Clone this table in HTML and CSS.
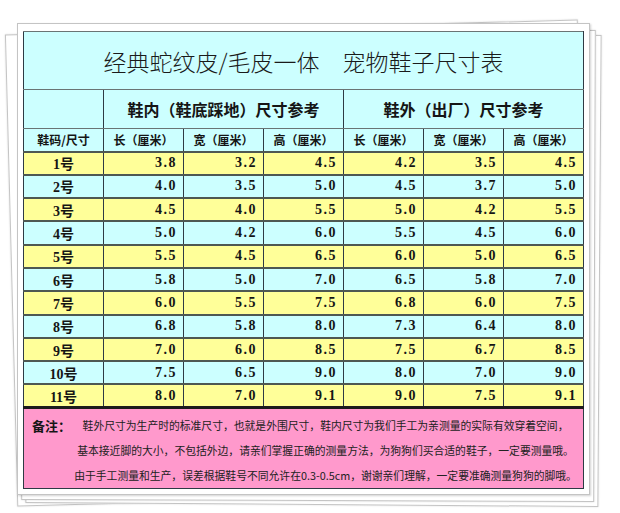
FILE: index.html
```html
<!DOCTYPE html>
<html lang="zh-CN">
<head>
<meta charset="utf-8">
<title>宠物鞋子尺寸表</title>
<link rel="stylesheet" href="styles.css">
</head>
<body>
<div class="stage">
  <div class="sheet back back-1"></div>
  <div class="sheet back back-2"></div>
  <div class="sheet back back-3"></div>
  <div class="sheet front">
    <table class="chart">
      <colgroup>
        <col><col><col><col><col><col><col>
      </colgroup>
      <tr class="title-row"><th colspan="7" class="title">经典蛇纹皮/毛皮一体　宠物鞋子尺寸表</th></tr>
      <tr class="group-row"><th></th><th colspan="3">鞋内（鞋底踩地）尺寸参考</th><th colspan="3">鞋外（出厂）尺寸参考</th></tr>
      <tr class="col-row"><th>鞋码/尺寸</th><th>长（厘米）</th><th>宽（厘米）</th><th>高（厘米）</th><th>长（厘米）</th><th>宽（厘米）</th><th>高（厘米）</th></tr>
      <tr class="row yellow"><th>1号</th><td>3.8</td><td>3.2</td><td>4.5</td><td>4.2</td><td>3.5</td><td>4.5</td></tr>
      <tr class="row cyan"><th>2号</th><td>4.0</td><td>3.5</td><td>5.0</td><td>4.5</td><td>3.7</td><td>5.0</td></tr>
      <tr class="row yellow"><th>3号</th><td>4.5</td><td>4.0</td><td>5.5</td><td>5.0</td><td>4.2</td><td>5.5</td></tr>
      <tr class="row cyan"><th>4号</th><td>5.0</td><td>4.2</td><td>6.0</td><td>5.5</td><td>4.5</td><td>6.0</td></tr>
      <tr class="row yellow"><th>5号</th><td>5.5</td><td>4.5</td><td>6.5</td><td>6.0</td><td>5.0</td><td>6.5</td></tr>
      <tr class="row cyan"><th>6号</th><td>5.8</td><td>5.0</td><td>7.0</td><td>6.5</td><td>5.8</td><td>7.0</td></tr>
      <tr class="row yellow"><th>7号</th><td>6.0</td><td>5.5</td><td>7.5</td><td>6.8</td><td>6.0</td><td>7.5</td></tr>
      <tr class="row cyan"><th>8号</th><td>6.8</td><td>5.8</td><td>8.0</td><td>7.3</td><td>6.4</td><td>8.0</td></tr>
      <tr class="row yellow"><th>9号</th><td>7.0</td><td>6.0</td><td>8.5</td><td>7.5</td><td>6.7</td><td>8.5</td></tr>
      <tr class="row cyan"><th>10号</th><td>7.5</td><td>6.5</td><td>9.0</td><td>8.0</td><td>7.0</td><td>9.0</td></tr>
      <tr class="row yellow"><th>11号</th><td>8.0</td><td>7.0</td><td>9.1</td><td>9.0</td><td>7.5</td><td>9.1</td></tr>
      <tr class="notes-row">
        <td colspan="7" class="notes-cell">
          <div class="notes">
            <span class="notes-label">备注：</span>
            <div class="notes-lines">
              <p>鞋外尺寸为生产时的标准尺寸，也就是外围尺寸，鞋内尺寸为我们手工为亲测量的实际有效穿着空间，</p>
              <p>基本接近脚的大小，不包括外边，请亲们掌握正确的测量方法，为狗狗们买合适的鞋子，一定要测量哦。</p>
              <p>由于手工测量和生产，误差根据鞋号不同允许在0.3-0.5cm，谢谢亲们理解，一定要准确测量狗狗的脚哦。</p>
            </div>
          </div>
        </td>
      </tr>
    </table>
  </div>
</div>
</body>
</html>
```

FILE: styles.css
```css
* { box-sizing: border-box; }

html, body {
  margin: 0;
  padding: 0;
  background: #ffffff;
}

body {
  font-family: "Noto Sans CJK SC", "Noto Sans", sans-serif;
  color: #151515;
}

.stage {
  position: relative;
  width: 620px;
  height: 513px;
  padding: 23px 0 0 17px;
  overflow: hidden;
}

.sheet {
  width: 573px;
  height: 472px;
  background: #ffffff;
  border: 1px solid #c4c4c4;
}

.back {
  position: absolute;
  box-shadow: 0 0 2px rgba(0, 0, 0, 0.15);
}

.back-1 {
  left: 11px;
  top: 27px;
  transform: rotate(-1.5deg);
}

.back-2 {
  left: 27px;
  top: 33px;
  transform: rotate(0.4deg);
}

.back-3 {
  left: 22px;
  top: 29px;
  transform: rotate(0.2deg);
}

.front {
  position: relative;
  padding: 7px 0 0 5px;
  box-shadow: 1px 1px 2px rgba(0, 0, 0, 0.18);
}

.chart {
  border-collapse: collapse;
  table-layout: fixed;
  width: 560px;
}

.chart col { width: 80px; }

.chart th,
.chart td {
  border: 1px solid #2e3a44;
  padding: 0;
  font-weight: bold;
}

.chart .title,
.group-row th {
  border-color: #6a7474;
  border-left-color: #2e3a44;
  border-right-color: #2e3a44;
}

.title-row,
.group-row,
.col-row,
.cyan { background: #ccffff; }

.yellow { background: #ffff99; }

.title-row { height: 58px; }

.chart .title {
  font-size: 23px;
  font-weight: 300;
  text-align: center;
  color: #1a1a1a;
}

.group-row { height: 39px; }

.group-row th {
  font-size: 16px;
  text-align: center;
}

.col-row { height: 23px; }

.col-row th {
  font-size: 12px;
  text-align: center;
}

.row { height: 23.3px; }

.chart .row th,
.chart .row td {
  border-top: 2px solid #4e5852;
  border-bottom: 2px solid #4e5852;
}

.row th {
  font-family: "Liberation Serif", "Noto Sans CJK SC", serif;
  font-size: 14px;
  text-align: center;
}

.row td {
  font-family: "Liberation Serif", serif;
  font-size: 14px;
  letter-spacing: 1.5px;
  text-align: right;
  padding-right: 6px;
}

.notes-row { height: 80px; }

.chart .notes-cell {
  background: #ff99cc;
  border-top: 3px solid #1c1c1c;
  vertical-align: top;
  font-weight: 400;
}

.notes {
  display: grid;
  grid-template-columns: 44px 1fr;
  padding-top: 4px;
}

.notes-label {
  padding-left: 8px;
  font-size: 13px;
  line-height: 25px;
  font-weight: bold;
  white-space: nowrap;
}

.notes-lines p {
  margin: 0;
  font-size: 10.8px;
  line-height: 25px;
  text-align: center;
  white-space: nowrap;
  color: #222;
}
```
